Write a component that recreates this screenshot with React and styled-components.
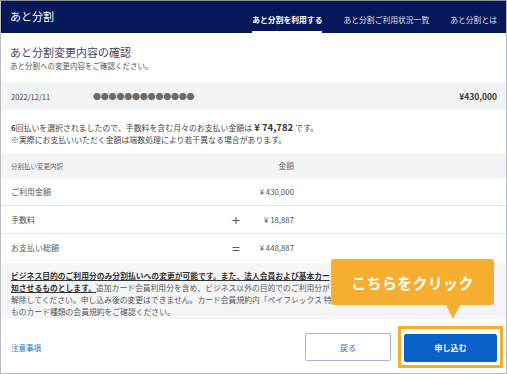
import React from "react";
import styled, { createGlobalStyle } from "styled-components";

const GlobalStyle = createGlobalStyle`
  html, body {
    margin: 0;
    padding: 0;
    background: #ffffff;
  }
  body {
    font-family: "Noto Sans CJK JP", "Noto Sans", "Liberation Sans", sans-serif;
  }
`;

const Page = styled.div`
  position: relative;
  width: 507px;
  height: 374px;
  box-sizing: border-box;
  border: 1px solid #b9bcc2;
  border-top-color: #8c8f96;
  overflow: hidden;
  background: #fff;
  display: flex;
  flex-direction: column;
`;

const Header = styled.div`
  height: 32px;
  background: #06185a;
  display: flex;
  align-items: stretch;
  padding: 0 9px 0 9px;
  flex-shrink: 0;
`;

const Brand = styled.div`
  color: #fff;
  font-size: 11px;
  display: flex;
  align-items: center;
  margin-top: -2px;
  flex: 1;
`;

const Tabs = styled.div`
  display: flex;
  gap: 21px;
`;

const Tab = styled.div`
  position: relative;
  color: #fff;
  font-size: 7.8px;
  font-weight: ${(p) => (p.$active ? 700 : 400)};
  opacity: ${(p) => (p.$active ? 1 : 0.85)};
  display: flex;
  align-items: center;
  padding-top: 4px;
  &::after {
    content: "";
    display: ${(p) => (p.$active ? "block" : "none")};
    position: absolute;
    left: 0;
    right: 0;
    bottom: 0;
    height: 2px;
    background: #fff;
  }
`;

const TitleBlock = styled.div`
  padding: 12px 9px 0;
  height: 49px;
  box-sizing: border-box;
`;

const Title = styled.div`
  font-size: 11px;
  color: #3d4663;
  line-height: 15px;
`;

const Sub = styled.div`
  font-size: 7.5px;
  color: #555;
  line-height: 12px;
`;

const UseRow = styled.div`
  height: 28px;
  background: #f2f3f5;
  display: flex;
  align-items: center;
  padding: 0 9px 0 10px;
  font-size: 7.5px;
  color: #444;
`;

const Date = styled.span`
  width: 82px;
`;

const Dots = styled.span`
  flex: 1;
  color: #6b6b6b;
  font-size: 8px;
  letter-spacing: -0.2px;
`;

const Total = styled.span`
  font-weight: 700;
  font-size: 8.5px;
  color: #333;
`;

const Message = styled.div`
  padding: 11px 10px 0;
  height: 43px;
  box-sizing: border-box;
  font-size: 7.9px;
  color: #444;
  line-height: 12px;
`;

const Strong = styled.b`
  font-size: 9.5px;
  color: #333;
  font-weight: 700;
`;

const Table = styled.div`
  display: flex;
  flex-direction: column;
`;

const Row = styled.div`
  display: grid;
  grid-template-columns: 213px 24px 46px 1fr;
  align-items: center;
  padding-left: 10px;
  height: ${(p) => (p.$head ? "25px" : "27px")};
  background: ${(p) => (p.$head ? "#f2f3f5" : "#fff")};
  border-bottom: ${(p) => (p.$last || p.$head ? "none" : "1px solid #e6e7ea")};
  font-size: ${(p) => (p.$head ? "6.5px" : "8px")};
  color: ${(p) => (p.$head ? "#666" : "#555")};
`;

const Op = styled.span`
  text-align: center;
  font-size: 14px;
  color: #555;
  line-height: 1;
`;

const Amount = styled.span`
  text-align: right;
  font-size: 7.8px;
  white-space: nowrap;
`;

const Note = styled.div`
  margin-top: 2px;
  background: #f4f5f7;
  padding: 7px 10px 0;
  height: 56px;
  box-sizing: border-box;
`;

const NoteText = styled.div`
  font-size: 7.8px;
  line-height: 12px;
  color: #555;
  white-space: nowrap;
`;

const Underline = styled.span`
  text-decoration: underline;
  font-weight: 700;
  color: #333;
`;

const Footer = styled.div`
  flex: 1;
  display: flex;
  align-items: center;
  padding: 0 9px 0 10px;
  padding-top: 2px;
`;

const Link = styled.a`
  color: #2c6fc7;
  font-size: 7.5px;
  flex: 1;
  text-decoration: none;
`;

const Button = styled.button`
  box-sizing: border-box;
  font-family: inherit;
  font-size: 8px;
  height: 28px;
  border-radius: 2px;
  cursor: pointer;
  border: 1px solid ${(p) => (p.$primary ? "#0a62c8" : "#9db8dc")};
  background: ${(p) => (p.$primary ? "#0a62c8" : "#fff")};
  color: ${(p) => (p.$primary ? "#fff" : "#2c6fc7")};
  font-weight: ${(p) => (p.$primary ? 700 : 400)};
  width: ${(p) => (p.$primary ? "93px" : "86px")};
`;

const Highlight = styled.div`
  margin-left: 7px;
  padding: 3px;
  border: 3px solid #f6ad2c;
  margin-right: -6px;
`;

const Callout = styled.div`
  position: absolute;
  left: 330px;
  top: 258px;
  width: 163px;
  height: 46px;
  background: #f6ae30;
  border-radius: 3px;
  color: #fff;
  font-weight: 700;
  font-size: 15px;
  display: flex;
  align-items: center;
  justify-content: center;
  letter-spacing: 0.3px;
  &::after {
    content: "";
    position: absolute;
    left: 115px;
    top: 46px;
    border-left: 7px solid transparent;
    border-right: 7px solid transparent;
    border-top: 14px solid #f6ae30;
  }
`;

export default function App() {
  return (
    <>
      <GlobalStyle />
      <Page>
        <Header>
          <Brand>あと分割</Brand>
          <Tabs>
            <Tab $active>あと分割を利用する</Tab>
            <Tab>あと分割ご利用状況一覧</Tab>
            <Tab>あと分割とは</Tab>
          </Tabs>
        </Header>
        <TitleBlock>
          <Title>あと分割変更内容の確認</Title>
          <Sub>あと分割への変更内容をご確認ください。</Sub>
        </TitleBlock>
        <UseRow>
          <Date>2022/12/11</Date>
          <Dots>●●●●●●●●●●●●●</Dots>
          <Total>¥430,000</Total>
        </UseRow>
        <Message>
          <div>
            <b>6</b>回払いを選択されましたので、手数料を含む月々のお支払い金額は<Strong> ¥ 74,782 </Strong>です。
          </div>
          <div>※実際にお支払いいただく金額は端数処理により若干異なる場合があります。</div>
        </Message>
        <Table>
          <Row $head>
            <span>分割払い変更内訳</span>
            <span />
            <Amount>金額</Amount>
          </Row>
          <Row>
            <span>ご利用金額</span>
            <Op />
            <Amount>¥ 430,000</Amount>
          </Row>
          <Row>
            <span>手数料</span>
            <Op>+</Op>
            <Amount>¥ 18,887</Amount>
          </Row>
          <Row $last>
            <span>お支払い総額</span>
            <Op>=</Op>
            <Amount>¥ 448,887</Amount>
          </Row>
        </Table>
        <Note>
          <NoteText>
            <Underline>ビジネス目的のご利用分のみ分割払いへの変更が可能です。また、法人会員および基本カー</Underline>
          </NoteText>
          <NoteText>
            <Underline>知させるものとします。</Underline>追加カード会員利用分を含め、ビジネス以外の目的でのご利用分が
          </NoteText>
          <NoteText>解除してください。申し込み後の変更はできません。カード会員規約内「ペイフレックス 特</NoteText>
          <NoteText>ものカード種類の会員規約をご確認ください。</NoteText>
        </Note>
        <Footer>
          <Link href="#">注意事項</Link>
          <Button>戻る</Button>
          <Highlight>
            <Button $primary>申し込む</Button>
          </Highlight>
        </Footer>
        <Callout>こちらをクリック</Callout>
      </Page>
    </>
  );
}
